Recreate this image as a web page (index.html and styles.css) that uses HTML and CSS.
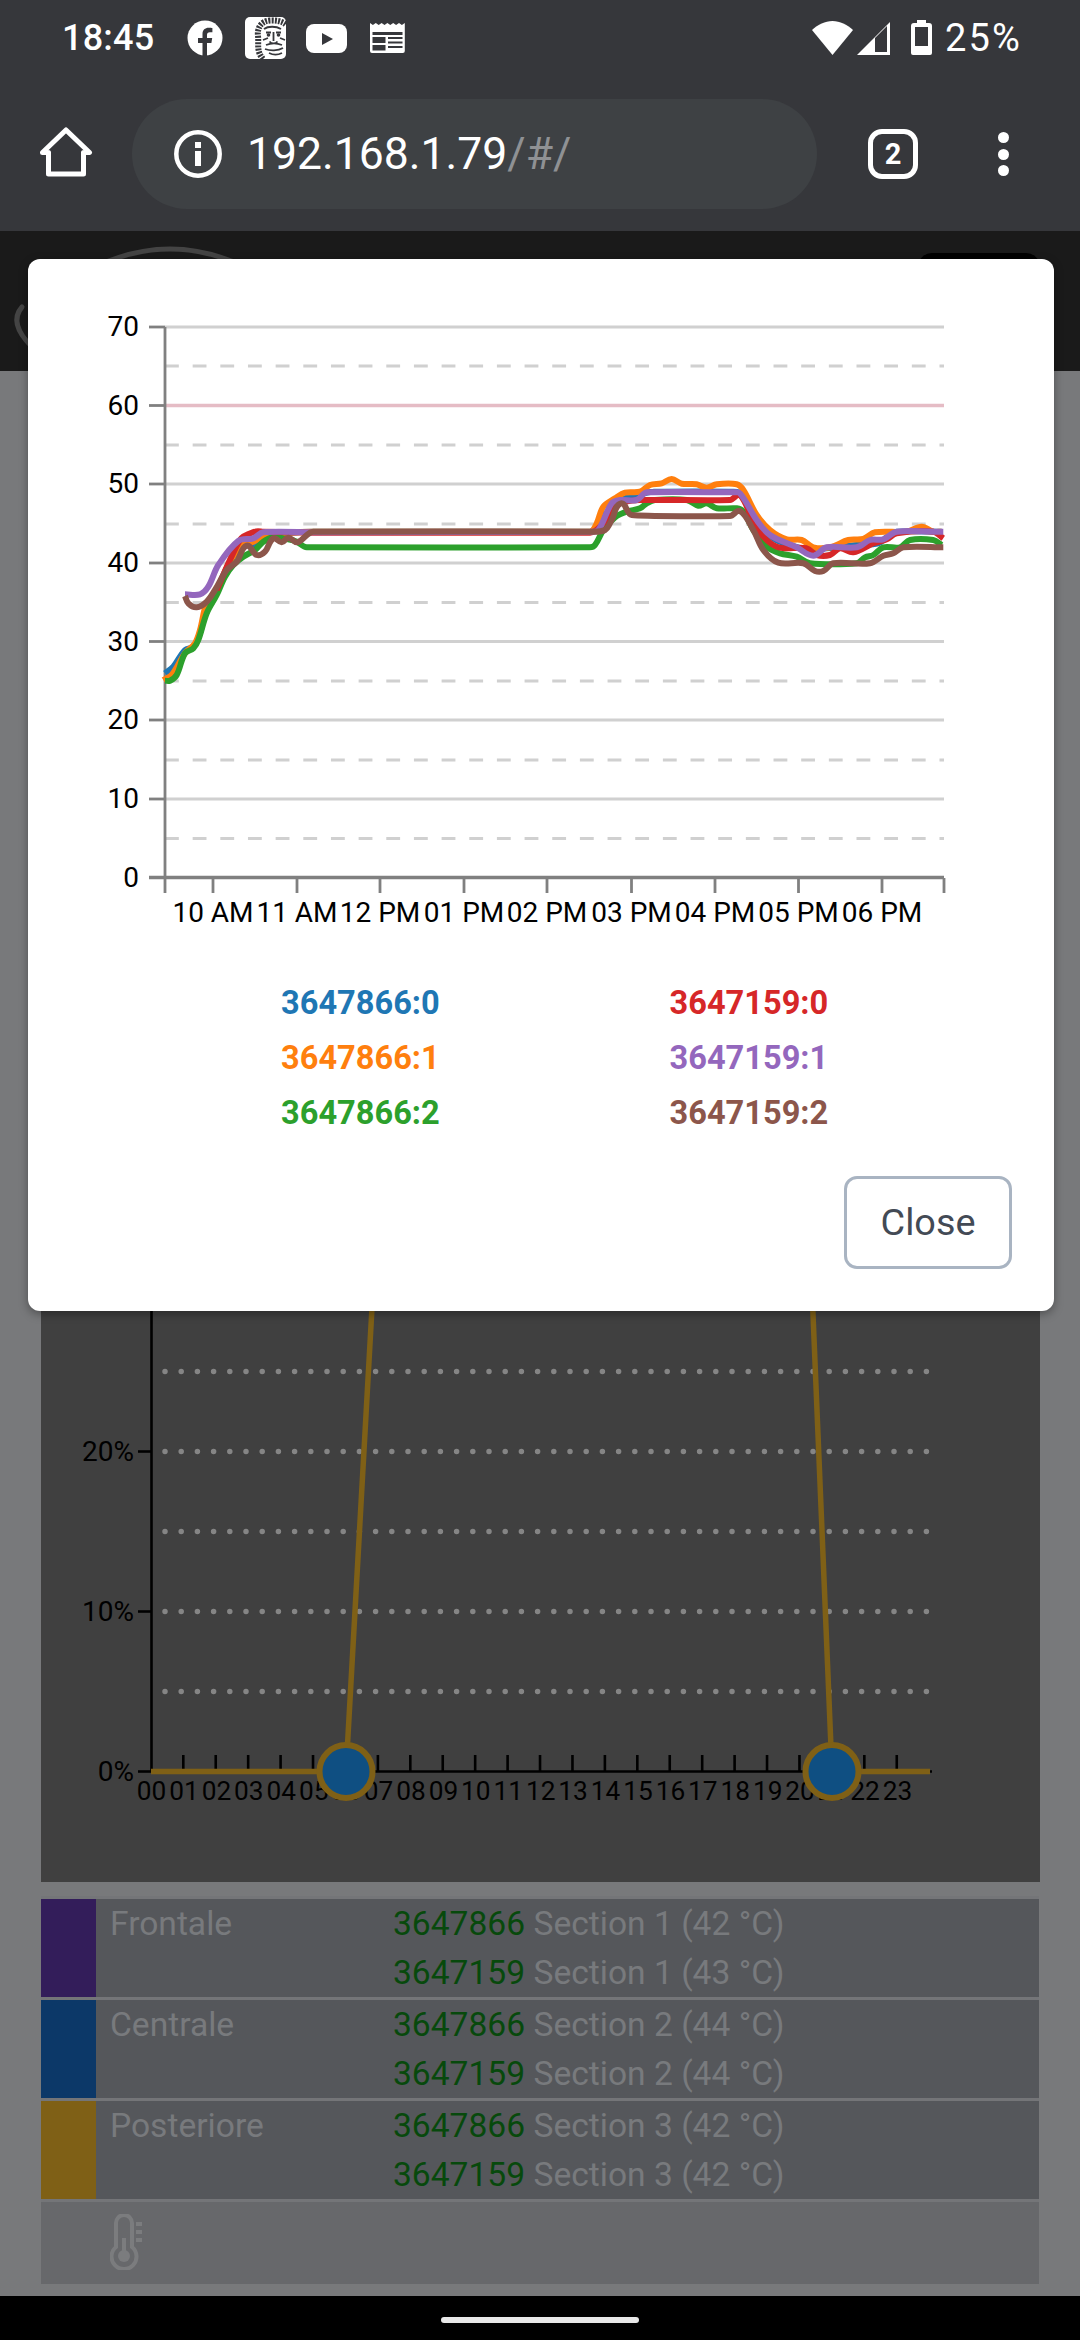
FILE: index.html
```html
<!DOCTYPE html>
<html lang="en">
<head>
<meta charset="utf-8">
<title>192.168.1.79</title>
<link rel="stylesheet" href="styles.css">
</head>
<body>
<div class="screen">
  <div class="chrome">
    <div class="statusbar">
      <span class="clock">18:45</span>
      <svg class="ic-fb" viewBox="0 0 36 36"><circle cx="18" cy="18" r="17.5" fill="#fff"/><path fill="#36373b" d="M20 36V23h4.4l.8-5H20v-3c0-1.500.7-2.700 2.900-2.700h2.500V8c-.8-.1-2.100-.3-3.700-.3-3.700 0-6.200 2.200-6.200 6.300v4h-4.500v5h4.500v13z"/></svg>
      <svg class="ic-lion" viewBox="0 0 41 42"><rect width="41" height="42" rx="5" fill="#fff"/><g fill="none" stroke="#36373b"><path stroke-width="6" stroke-dasharray="2 1.200" d="M18 42C11 34 14 27 13 19 12 11 16 4 25 3.500c6-.3 12 .5 16 4"/><path stroke-width="1.800" d="M19 12c4-3 12-3 17 0M21 15.500h5M31 15.500h5M28.500 15v9M24.500 24.500c2 2.500 6 2.500 8 0M21 28c5-2 11-2 16 0M20 32c5 2 13 2 18-1M24 36c4 2 9 2 13 0M23 21l-5 2M35 21l5 2"/></g><circle cx="23.500" cy="18" r="1.800" fill="#36373b"/><circle cx="33.500" cy="18" r="1.800" fill="#36373b"/></svg>
      <svg class="ic-yt" viewBox="0 0 41 29"><rect width="41" height="29" rx="8" fill="#fff"/><path fill="#36373b" d="M16 9l11 6-11 6z"/></svg>
      <svg class="ic-news" viewBox="0 0 35 30"><path fill="#fff" d="M0 0l2.900 2 2.900-2 2.900 2 2.900-2 2.900 2 2.900-2 2.900 2 2.900-2 2.900 2 2.900-2 2.900 2 2.900-2v28a2 2 0 0 1-2 2H2a2 2 0 0 1-2-2z"/><path fill="#36373b" d="M2.500 9h30v3h-30zM2.500 14h13v6h-13zM2.500 22h13v5.500h-13zM18 14h14.500v2H18zM18 18.500h14.500v2H18zM18 23h14.500v2H18z"/></svg>
      <div class="status-right">
        <svg class="ic-wifi" viewBox="0 0 41 34"><path fill="#fff" d="M20.500 34L0 9C6 3.500 13 0 20.500 0S35 3.500 41 9z"/></svg>
        <svg class="ic-signal" viewBox="0 0 33 34"><path fill="#fff" d="M0 34L33 1v33z"/><path fill="#36373b" d="M18 31V17l12-12v26z" /></svg>
        <svg class="ic-batt" viewBox="0 0 21 35"><path fill="#fff" d="M6 0h9v3h3a3 3 0 0 1 3 3v27a2 2 0 0 1-2 2H2a2 2 0 0 1-2-2V6a3 3 0 0 1 3-3h3z"/><path fill="#36373b" d="M4 7h13v19H4z"/></svg>
        <span class="pct">25%</span>
      </div>
    </div>
    <div class="toolbar">
      <svg class="ic-home" viewBox="0 0 54 52"><path fill="none" stroke="#fff" stroke-width="5" stroke-linejoin="round" d="M3.500 25.500L27 3l23.500 22.500h-6V47h-35V25.500z"/></svg>
      <div class="omnibox">
        <svg class="ic-info" viewBox="0 0 48 48"><circle cx="24" cy="24" r="21.700" fill="none" stroke="#fff" stroke-width="4.500"/><path fill="#fff" d="M21 12h6v6h-6zM21 21h6v15h-6z"/></svg>
        <span class="url">192.168.1.79<span class="url-path">/#/</span></span>
      </div>
      <div class="tabs">2</div>
      <div class="menu"><i></i><i></i><i></i></div>
    </div>
  </div>

  <div class="page">
    <div class="page-header">
      <svg class="logo" viewBox="0 0 260 140"><g fill="none" stroke="#444" stroke-width="5" stroke-linecap="round"><path d="M95 36Q170 0 245 36"/><path d="M22 76Q8 92 32 116"/></g></svg>
      <div class="pill"></div>
    </div>

    <div class="card">
      <svg class="power-chart" viewBox="41 385 999 1497">
        <g class="dots">
          <line x1="165" x2="933" y1="1371.500"  y2="1371.500"/>
          <line x1="165" x2="933" y1="1451.500" y2="1451.500"/>
          <line x1="165" x2="933" y1="1531.500" y2="1531.500"/>
          <line x1="165" x2="933" y1="1611.500" y2="1611.500"/>
          <line x1="165" x2="933" y1="1691.500" y2="1691.500"/>
        </g>
        <g class="axis-black">
          <line x1="151.500" x2="151.500" y1="1290" y2="1772"/>
          <line x1="138" x2="151" y1="1451.500" y2="1451.500"/>
          <line x1="138" x2="151" y1="1611.500" y2="1611.500"/>
          <line x1="138" x2="151" y1="1771.500" y2="1771.500"/>
          <line x1="151" x2="932" y1="1771.500" y2="1771.500"/>
          <line class="hour-ticks" x1="182" x2="899" y1="1763" y2="1763"/>
        </g>
        <g class="pct-labels">
          <text x="134" y="1461">20%</text>
          <text x="134" y="1621">10%</text>
          <text x="134" y="1781">0%</text>
        </g>
        <g class="hour-labels">
          <text x="151.500" y="1800">00</text><text x="183.900" y="1800">01</text><text x="216.400" y="1800">02</text><text x="248.800" y="1800">03</text><text x="281.200" y="1800">04</text><text x="313.700" y="1800">05</text><text x="346.100" y="1800">06</text><text x="378.500" y="1800">07</text><text x="410.900" y="1800">08</text><text x="443.400" y="1800">09</text><text x="475.800" y="1800">10</text><text x="508.200" y="1800">11</text><text x="540.700" y="1800">12</text><text x="573.100" y="1800">13</text><text x="605.500" y="1800">14</text><text x="637.900" y="1800">15</text><text x="670.400" y="1800">16</text><text x="702.800" y="1800">17</text><text x="735.200" y="1800">18</text><text x="767.700" y="1800">19</text><text x="800.100" y="1800">20</text><text x="832.500" y="1800">21</text><text x="864.900" y="1800">22</text><text x="897.400" y="1800">23</text>
        </g>
        <path class="gold-line" d="M151 1771.500H346L373 1290M812 1290L832 1771.500H930"/>
        <circle class="node" cx="346" cy="1771.500" r="26.500"/>
        <circle class="node" cx="832" cy="1771.500" r="26.500"/>
      </svg>
    </div>

    <div class="sections">
      <div class="section">
        <div class="swatch swatch-purple"></div>
        <div class="section-name">Frontale</div>
        <div class="section-probes">
          <div><span class="probe-id">3647866</span> Section 1 (42 °C)</div>
          <div><span class="probe-id">3647159</span> Section 1 (43 °C)</div>
        </div>
      </div>
      <div class="section">
        <div class="swatch swatch-blue"></div>
        <div class="section-name">Centrale</div>
        <div class="section-probes">
          <div><span class="probe-id">3647866</span> Section 2 (44 °C)</div>
          <div><span class="probe-id">3647159</span> Section 2 (44 °C)</div>
        </div>
      </div>
      <div class="section">
        <div class="swatch swatch-gold"></div>
        <div class="section-name">Posteriore</div>
        <div class="section-probes">
          <div><span class="probe-id">3647866</span> Section 3 (42 °C)</div>
          <div><span class="probe-id">3647159</span> Section 3 (42 °C)</div>
        </div>
      </div>
      <div class="section-temp">
        <svg class="ic-thermo" viewBox="0 0 32 56"><g fill="none" stroke="#7b7c7e" stroke-width="4"><path d="M6 33V9a8 8 0 0 1 16 0v24a12.500 12.500 0 1 1-16 0z"/></g><path fill="#7b7c7e" d="M12 24h4v18h-4z"/><circle cx="14" cy="42" r="6" fill="#7b7c7e"/><path fill="#7b7c7e" d="M26 8h6v4h-6zM26 16h6v4h-6zM26 24h6v4h-6z"/></svg>
      </div>
    </div>
  </div>

  <div class="navbar"><div class="home-pill"></div></div>

  <div class="modal">
    <svg class="temp-chart" viewBox="28 259 1026 701">
      <g class="grid">
        <line x1="165" x2="944" y1="327" y2="327"/>
        <line x1="165" x2="944" y1="484" y2="484"/>
        <line x1="165" x2="944" y1="563" y2="563"/>
        <line x1="165" x2="944" y1="641.500" y2="641.500"/>
        <line x1="165" x2="944" y1="720" y2="720"/>
        <line x1="165" x2="944" y1="799" y2="799"/>
        <line class="limit" x1="165" x2="944" y1="405.500" y2="405.500"/>
      </g>
      <g class="grid grid-dash">
        <line x1="165" x2="944" y1="366" y2="366"/>
        <line x1="165" x2="944" y1="445" y2="445"/>
        <line x1="165" x2="944" y1="524" y2="524"/>
        <line x1="165" x2="944" y1="602.500" y2="602.500"/>
        <line x1="165" x2="944" y1="681" y2="681"/>
        <line x1="165" x2="944" y1="760" y2="760"/>
        <line x1="165" x2="944" y1="838.500" y2="838.500"/>
      </g>
      <g class="axis-gray">
        <line x1="165" x2="165" y1="327" y2="893"/>
        <line class="axis-x" x1="149" x2="944" y1="877.500" y2="877.500"/>
        <line x1="149" x2="165" y1="327" y2="327"/><line x1="149" x2="165" y1="405.500" y2="405.500"/><line x1="149" x2="165" y1="484" y2="484"/><line x1="149" x2="165" y1="563" y2="563"/><line x1="149" x2="165" y1="641.500" y2="641.500"/><line x1="149" x2="165" y1="720" y2="720"/><line x1="149" x2="165" y1="799" y2="799"/>
        <line x1="213" x2="213" y1="878" y2="893"/><line x1="297" x2="297" y1="878" y2="893"/><line x1="380" x2="380" y1="878" y2="893"/><line x1="464" x2="464" y1="878" y2="893"/><line x1="547" x2="547" y1="878" y2="893"/><line x1="631.500" x2="631.500" y1="878" y2="893"/><line x1="715" x2="715" y1="878" y2="893"/><line x1="798.500" x2="798.500" y1="878" y2="893"/><line x1="882" x2="882" y1="878" y2="893"/><line x1="944" x2="944" y1="878" y2="893"/>
      </g>
      <g id="series" class="series"></g>
      <g class="y-labels">
        <text x="139" y="336">70</text><text x="139" y="414.500">60</text><text x="139" y="493">50</text><text x="139" y="572">40</text><text x="139" y="650.500">30</text><text x="139" y="729">20</text><text x="139" y="808">10</text><text x="139" y="886.500">0</text>
      </g>
      <g class="x-labels">
        <text x="213" y="922">10 AM</text><text x="297" y="922">11 AM</text><text x="380" y="922">12 PM</text><text x="464" y="922">01 PM</text><text x="547" y="922">02 PM</text><text x="631.500" y="922">03 PM</text><text x="715" y="922">04 PM</text><text x="798.500" y="922">05 PM</text><text x="882" y="922">06 PM</text>
      </g>
    </svg>
    <div class="legend">
      <div class="c-blue">3647866:0</div>
      <div class="c-orange">3647866:1</div>
      <div class="c-green">3647866:2</div>
      <div class="c-red">3647159:0</div>
      <div class="c-purple">3647159:1</div>
      <div class="c-brown">3647159:2</div>
    </div>
    <div class="modal-footer"><button class="close-btn" type="button">Close</button></div>
  </div>
</div>
<script src="chart.js"></script>
</body>
</html>
```
FILE: styles.css
```css
* { box-sizing: border-box; }
html, body { margin: 0; padding: 0; }
body { font-family: Roboto, "Liberation Sans", sans-serif; background: #000; }
svg { display: block; }

.screen { position: relative; width: 1080px; height: 2340px; display: flex; flex-direction: column; overflow: hidden; }

/* Browser chrome */
.chrome { height: 231px; background: #36373b; color: #fff; flex: none; }
.statusbar { height: 99px; display: flex; align-items: flex-start; padding-left: 62px; position: relative; }
.clock { font-size: 36px; font-weight: 500; line-height: 38px; margin-top: 19px; letter-spacing: .2px; width: 125px; }
.ic-fb { width: 36px; height: 36px; margin-top: 20px; margin-left: 0; }
.ic-lion { width: 41px; height: 42px; margin-top: 17px; margin-left: 22px; }
.ic-yt { width: 41px; height: 29px; margin-top: 24px; margin-left: 20px; }
.ic-news { width: 35px; height: 30px; margin-top: 23px; margin-left: 23px; }
.status-right { margin-left: auto; display: flex; align-items: flex-start; padding-right: 63px; }
.ic-wifi { width: 41px; height: 34px; margin-top: 21px; }
.ic-signal { width: 33px; height: 34px; margin-top: 21px; margin-left: 4px; }
.ic-batt { width: 21px; height: 35px; margin-top: 20px; margin-left: 21px; }
.pct { width: 72px; font-size: 38px; font-weight: 400; letter-spacing: 2.200px; line-height: 38px; margin-top: 19px; margin-left: 13px; white-space: nowrap; }

.toolbar { height: 132px; display: flex; align-items: flex-start; }
.ic-home { width: 54px; height: 52px; margin-top: 28px; margin-left: 39px; }
.omnibox { width: 685px; height: 110px; margin-left: 39px; background: #3e4144; border-radius: 55px; display: flex; align-items: center; padding-left: 42px; }
.ic-info { width: 48px; height: 48px; }
.url { font-size: 44.500px; margin-left: 25px; line-height: 50px; }
.url-path { color: #8f9194; }
.tabs { width: 50px; height: 50px; margin-top: 30px; margin-left: 51px; border: 5px solid #fff; border-radius: 14px; font-size: 29px; font-weight: 700; line-height: 40px; text-align: center; }
.menu { margin-top: 33px; margin-left: 80px; display: flex; flex-direction: column; gap: 5.500px; }
.menu i { display: block; width: 11px; height: 11px; border-radius: 50%; background: #fff; }

/* Dimmed page */
.page { height: 2065px; flex: none; background: #78797b; display: flex; flex-direction: column; align-items: flex-start; padding-left: 41px; }
.page-header { margin-left: -41px; width: 1080px; height: 140px; background: #1a1a1a; display: flex; justify-content: space-between; padding-right: 40px; flex: none; }
.logo { width: 260px; height: 140px; }
.pill { width: 122px; height: 60px; margin-top: 22px; background: #000; border-radius: 14px; }

.card { width: 999px; height: 1497px; margin-top: 14px; background: #404040; flex: none; }
.power-chart { width: 999px; height: 1497px; }
.dots line { stroke: #858585; stroke-width: 5.500; stroke-linecap: round; stroke-dasharray: 0 16.200; }
.axis-black line { stroke: #000; stroke-width: 2.600; }
.axis-black .hour-ticks { stroke-width: 16; stroke-dasharray: 2.600 29.830; }
.pct-labels text, .hour-labels text, .y-labels text, .x-labels text { font-family: Roboto, sans-serif; font-size: 28px; fill: #000; }
.pct-labels text, .y-labels text { text-anchor: end; }
.hour-labels text, .x-labels text { text-anchor: middle; }
.hour-labels text { font-size: 26.250px; }
.gold-line { fill: none; stroke: #7f6016; stroke-width: 5.500; }
.node { fill: #0f4f82; stroke: #7f6016; stroke-width: 6; }

.sections { margin-top: 14px; width: 998px; background: #747578; padding-top: 3px; display: flex; flex-direction: column; gap: 3px; flex: none; }
.section { height: 98px; background: #55575b; display: flex; font-size: 33.600px; line-height: 49px; color: #787a7d; }
.swatch { width: 55px; flex: none; }
.swatch-purple { background: #331d5a; }
.swatch-blue { background: #0c3868; }
.swatch-gold { background: #7f6016; }
.section-name { width: 297px; flex: none; padding-left: 14px; }
.probe-id { color: #07490c; }
.section-temp { height: 82px; background: #67686b; padding: 12px 0 0 69px; }
.ic-thermo { width: 32px; height: 56px; }

.navbar { height: 44px; background: #000; flex: none; display: flex; justify-content: center; padding-top: 21px; }
.home-pill { width: 198px; height: 6px; border-radius: 3px; background: #e8e8e8; }

/* Modal over the page */
.modal { position: absolute; left: 28px; top: 259px; width: 1026px; height: 1052px; background: #fff; border-radius: 12px; box-shadow: 0 3px 10px rgba(0,0,0,.35); display: flex; flex-direction: column; }
.temp-chart { width: 1026px; height: 701px; flex: none; }
.grid line { stroke: #d0d0d0; stroke-width: 3.200; }
.grid .limit { stroke: #e5bcc5; stroke-width: 3.600; }
.grid-dash line { stroke-dasharray: 13.830; }
.axis-gray line { stroke: #808080; stroke-width: 2.800; }
.axis-gray .axis-x { stroke-width: 3.500; }
.series path { fill: none; stroke-width: 6; stroke-linejoin: round; stroke-linecap: butt; }
.legend { margin-top: 15.500px; margin-left: 253px; display: grid; grid-template-columns: 388.500px auto; grid-template-rows: repeat(3, 55px); grid-auto-flow: column; font-weight: 700; font-size: 32.600px; line-height: 55px; width: 600px; }
.c-blue { color: #1f77b4; }
.c-orange { color: #ff7f0e; }
.c-green { color: #2ca02c; }
.c-red { color: #d62728; }
.c-purple { color: #9467bd; }
.c-brown { color: #8c564b; }
.modal-footer { margin-top: 35px; padding-right: 42px; display: flex; justify-content: flex-end; }
.close-btn { width: 168px; height: 93px; border: 3px solid #a9b4c2; border-radius: 13px; background: #fff; color: #434a55; font-family: Roboto, sans-serif; font-size: 37.800px; padding: 0; }
```
FILE: chart.js
```js
// Temperature series: smooth the sampled points into SVG curves.
var L = 100, R = 540;
function pts(left, right) {
  var out = [], i;
  for (i = 0; i < left.length; i += 2) out.push([L + left[i] / 3, 440 + left[i + 1] / 3]);
  for (i = 0; i < right.length; i += 2) out.push([R + right[i] / 3, 440 + right[i + 1] / 3]);
  return out;
}
var series = [
  ['#1f77b4', pts([195,700,220,680,255,630,280,620,300,580,320,500,350,450,380,385,420,325,470,310,520,285,640,275],
    [150,275,190,230,230,185,260,170,310,160,340,155,580,155,610,165,650,240,700,295,760,318,810,330,860,325,950,315,1015,310,1040,292,1070,275,1205,275])],
  ['#ff7f0e', pts([190,720,215,705,255,640,285,610,300,570,320,490,350,455,380,385,420,320,460,305,500,285,640,275],
    [150,275,170,250,190,200,225,175,255,158,300,155,330,135,365,130,395,117,425,131,470,133,500,143,530,133,590,133,610,150,650,225,690,270,740,298,785,300,820,322,870,322,925,300,970,297,1005,277,1100,275,1145,260,1180,275,1205,275])],
  ['#2ca02c', pts([195,722,210,722,230,705,255,640,280,625,295,600,320,520,350,465,375,410,400,375,430,350,465,330,490,305,520,292,565,298,590,305,620,322],
    [150,322,165,315,190,270,225,232,260,215,300,205,320,190,345,180,440,180,475,197,500,190,530,205,590,205,610,215,640,270,680,320,720,340,770,350,810,370,950,370,975,352,1000,345,1030,322,1080,322,1110,300,1180,300,1205,315])],
  ['#d62728', pts([350,450,420,300,465,275,490,275,640,278],
    [150,278,190,250,230,195,300,180,570,180,600,165,650,265,710,320,800,325,830,345,870,345,900,325,940,337,1000,310,1040,298,1070,280,1180,275,1210,295])],
  ['#9467bd', pts([255,463,300,463,325,440,355,375,415,303,460,295,490,277,640,277],
    [150,275,175,270,215,190,240,180,290,180,320,157,580,157,600,160,650,240,690,285,770,322,820,347,860,322,950,322,990,300,1030,298,1070,275,1210,275])],
  ['#8c564b', pts([255,468,265,490,290,502,320,485,345,450,380,390,410,365,440,317,470,345,495,335,520,295,545,307,565,293,592,307,640,275],
    [150,275,195,270,215,240,243,190,275,225,570,228,600,213,640,270,670,330,715,368,790,370,825,393,850,393,880,370,990,370,1030,347,1060,340,1090,322,1210,322])]
];
function dir(a, b) {
  var dx = b[0] - a[0], dy = b[1] - a[1], l = Math.sqrt(dx * dx + dy * dy) || 1;
  return [dx / l, dy / l];
}
function curve(p) {
  var d = 'M' + p[0][0].toFixed(1) + ' ' + p[0][1].toFixed(1);
  for (var i = 0; i < p.length - 1; i++) {
    var a = p[i], b = p[i + 1];
    var t0 = dir(p[i - 1] || a, b), t1 = dir(a, p[i + 2] || b);
    var l = Math.min(Math.sqrt(Math.pow(b[0] - a[0], 2) + Math.pow(b[1] - a[1], 2)) / 3, 12);
    d += 'C' + (a[0] + t0[0] * l).toFixed(1) + ' ' + (a[1] + t0[1] * l).toFixed(1) + ' ' +
      (b[0] - t1[0] * l).toFixed(1) + ' ' + (b[1] - t1[1] * l).toFixed(1) + ' ' +
      b[0].toFixed(1) + ' ' + b[1].toFixed(1);
  }
  return d;
}
var host = document.getElementById('series');
series.forEach(function (s) {
  var path = document.createElementNS('http://www.w3.org/2000/svg', 'path');
  path.setAttribute('d', curve(s[1]));
  path.setAttribute('stroke', s[0]);
  host.appendChild(path);
});
```
